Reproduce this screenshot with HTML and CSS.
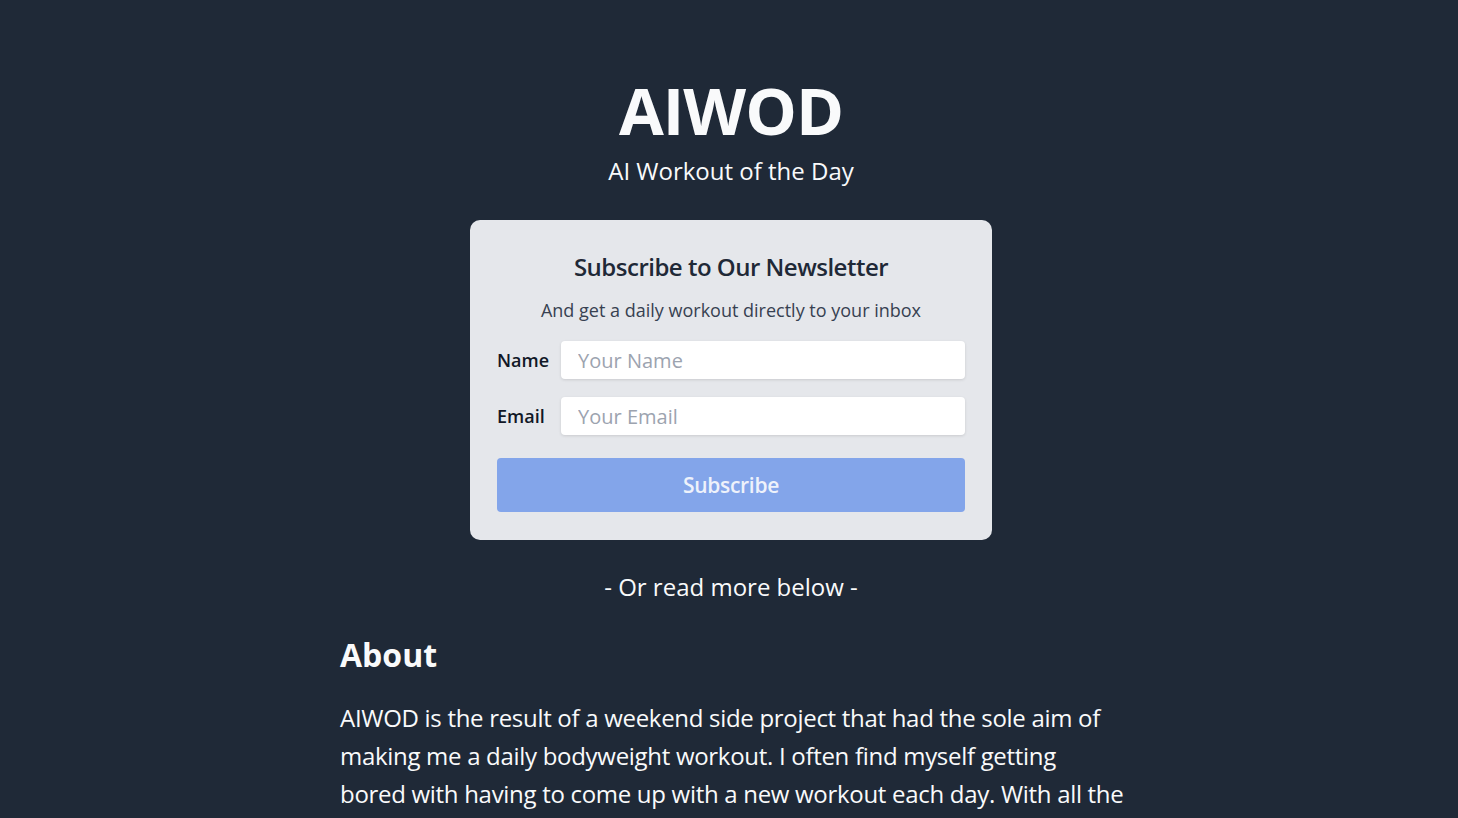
FILE: index.html
```html
<!DOCTYPE html>
<html lang="en">
<head>
<meta charset="utf-8">
<title>AIWOD</title>
<link rel="stylesheet" href="styles.css">
</head>
<body>
<main class="page">
  <header class="hero">
    <h1 class="brand">AIWOD</h1>
    <p class="tagline">AI Workout of the Day</p>
  </header>

  <section class="card">
    <h2 class="card-title">Subscribe to Our Newsletter</h2>
    <p class="card-sub">And get a daily workout directly to your inbox</p>
    <form class="form">
      <div class="fields">
        <label class="label" for="name">Name</label>
        <input class="input" id="name" type="text" placeholder="Your Name">
        <label class="label" for="email">Email</label>
        <input class="input" id="email" type="email" placeholder="Your Email">
      </div>
      <button class="btn" type="button">Subscribe</button>
    </form>
  </section>

  <p class="divider">- Or read more below -</p>

  <article class="about">
    <h2 class="about-title">About</h2>
    <p class="about-text">AIWOD is the result of a weekend side project that had the sole aim of making me a daily bodyweight workout. I often find myself getting bored with having to come up with a new workout each day. With all the hype around AI, I figured why not let it do the thinking for me.</p>
  </article>
</main>
</body>
</html>
```
FILE: styles.css
```css
* { box-sizing: border-box; }
html, body { margin: 0; padding: 0; }
body {
  background: #1f2937;
  color: #f9fafb;
  font-family: "Open Sans", "Noto Sans", "Liberation Sans", sans-serif;
  overflow: hidden;
  height: 818px;
}
.page {
  display: flex;
  flex-direction: column;
  align-items: center;
  padding-top: 74px;
  padding-left: 4px;
}
.hero { text-align: center; }
.brand {
  margin: 0;
  font-size: 65px;
  line-height: 72px;
  font-weight: 700;
  letter-spacing: -1px;
}
.tagline {
  margin: 9px 0 0;
  font-size: 24px;
  line-height: 32px;
}
.card {
  margin-top: 33px;
  width: 522px;
  background: #e5e7eb;
  border-radius: 10px;
  padding: 31px 27px 28px;
  color: #1f2937;
  text-align: center;
}
.card-title {
  margin: 0;
  font-size: 24px;
  line-height: 32px;
  font-weight: 600;
  letter-spacing: -0.5px;
}
.card-sub {
  margin: 13px 0 0;
  font-size: 18px;
  line-height: 28px;
  color: #374151;
}
.form {
  margin-top: 17px;
  display: flex;
  flex-direction: column;
  gap: 23px;
}
.fields {
  display: grid;
  grid-template-columns: auto 1fr;
  column-gap: 12px;
  row-gap: 18px;
  align-items: center;
  text-align: left;
}
.label {
  font-size: 18px;
  font-weight: 600;
  color: #111827;
}
.input {
  width: 100%;
  height: 38px;
  border: 0;
  border-radius: 4px;
  background: #fff;
  box-shadow: 0 1px 3px rgba(0,0,0,0.12);
  padding: 0 17px;
  font-family: inherit;
  font-size: 20px;
  color: #1f2937;
}
.input::placeholder { color: #9ca3af; }
.btn {
  height: 54px;
  border: 0;
  border-radius: 4px;
  background: #83a5ea;
  color: #eef2fb;
  font-family: inherit;
  font-size: 21px;
  font-weight: 600;
  letter-spacing: -0.3px;
}
.divider {
  margin: 31px 0 0;
  font-size: 24px;
  line-height: 32px;
}
.about {
  width: 785px;
  margin-top: 32px;
  margin-left: 3px;
}
.about-title {
  margin: 0;
  font-size: 32px;
  line-height: 40px;
  font-weight: 700;
}
.about-text {
  margin: 24px 0 0;
  font-size: 24px;
  line-height: 38px;
  letter-spacing: -0.3px;
}
```
